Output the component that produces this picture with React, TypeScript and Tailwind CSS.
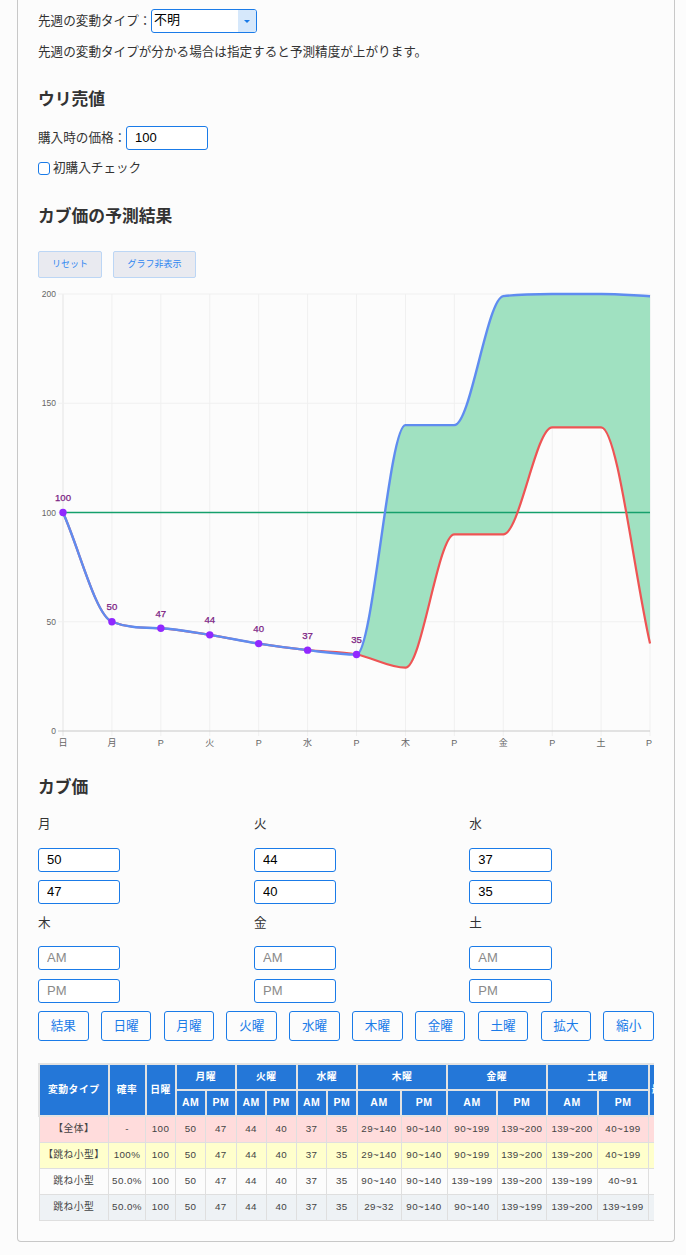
import React from "react";

const sans = "font-['Liberation_Sans','Noto_Sans_CJK_JP',sans-serif]";

const xLabels = ["日", "月", "P", "火", "P", "水", "P", "木", "P", "金", "P", "土", "P"];
const maxValues = [100, 50, 47, 44, 40, 37, 35, 140, 140, 199, 200, 200, 199];
const minValues = [100, 50, 47, 44, 40, 37, 35, 29, 90, 90, 139, 139, 40];
const marked = [100, 50, 47, 44, 40, 37, 35];

const xAt = (i: number) => 63 + i * 48.92;
const yAt = (v: number) => 731 - v * 2.185;

// same monotone cubic that chart.js uses, returns segments as "C ..." strings
function monotoneSegments(values: number[]) {
  const pts = values.map((v, i) => ({ x: xAt(i), y: yAt(v) }));
  const deltas = pts.slice(0, -1).map((p, i) => (pts[i + 1].y - p.y) / (pts[i + 1].x - p.x));
  const m = pts.map((_, i) => {
    if (i === 0) return deltas[0];
    if (i === pts.length - 1) return deltas[i - 1];
    if (deltas[i - 1] * deltas[i] <= 0) return 0;
    return (deltas[i - 1] + deltas[i]) / 2;
  });
  for (let i = 0; i < deltas.length; i++) {
    if (deltas[i] === 0) {
      m[i] = 0;
      m[i + 1] = 0;
      continue;
    }
    const a = m[i] / deltas[i];
    const b = m[i + 1] / deltas[i];
    const s = a * a + b * b;
    if (s > 9) {
      const t = 3 / Math.sqrt(s);
      m[i] = a * t * deltas[i];
      m[i + 1] = b * t * deltas[i];
    }
  }
  return pts.slice(0, -1).map((p, i) => {
    const q = pts[i + 1];
    const dx = (q.x - p.x) / 3;
    return { from: p, to: q, c1: { x: p.x + dx, y: p.y + dx * m[i] }, c2: { x: q.x - dx, y: q.y - dx * m[i + 1] } };
  });
}

const forward = (values: number[]) => {
  const segs = monotoneSegments(values);
  return `M${segs[0].from.x} ${segs[0].from.y}` + segs.map((s) => ` C${s.c1.x} ${s.c1.y} ${s.c2.x} ${s.c2.y} ${s.to.x} ${s.to.y}`).join("");
};

function bandPath() {
  const top = monotoneSegments(maxValues).slice(6);
  const bottom = monotoneSegments(minValues).slice(6).reverse();
  let d = `M${top[0].from.x} ${top[0].from.y}`;
  top.forEach((s) => (d += ` C${s.c1.x} ${s.c1.y} ${s.c2.x} ${s.c2.y} ${s.to.x} ${s.to.y}`));
  d += ` L${bottom[0].to.x} ${bottom[0].to.y}`;
  bottom.forEach((s) => (d += ` C${s.c2.x} ${s.c2.y} ${s.c1.x} ${s.c1.y} ${s.from.x} ${s.from.y}`));
  return d + " Z";
}

function Chart() {
  return (
    <svg viewBox="38 285 616 470" className="mt-[7px] block h-[470px] w-[616px]">
      {xLabels.map((_, i) => (
        <line key={i} x1={xAt(i)} x2={xAt(i)} y1={294} y2={736} stroke={i === 0 ? "#e4e4e4" : "#f0f0f0"} />
      ))}
      {[200, 150, 100, 50, 0].map((v) => (
        <g key={v}>
          <line x1={58} x2={650} y1={yAt(v)} y2={yAt(v)} stroke={v === 0 ? "#c8c8c8" : "#f0f0f0"} />
          <text x={56} y={yAt(v) + 3} textAnchor="end" fontSize="8.5" fill="#666" fontFamily="Liberation Sans">
            {v}
          </text>
        </g>
      ))}
      {xLabels.map((label, i) => (
        <text key={i} x={i === 12 ? xAt(i) - 1 : xAt(i)} y={746} textAnchor="middle" fontSize="9" fill="#666" fontFamily="Liberation Sans, Noto Sans CJK JP">
          {label}
        </text>
      ))}
      <path d={bandPath()} fill="#a0e1c1" />
      <line x1={63} x2={650} y1={yAt(100)} y2={yAt(100)} stroke="#15a06c" strokeWidth="1.5" />
      <path d={forward(minValues)} fill="none" stroke="#ee5454" strokeWidth="2.2" />
      <path d={forward(maxValues)} fill="none" stroke="#5f8cf0" strokeWidth="2.4" />
      {marked.map((v, i) => (
        <g key={i}>
          <circle cx={xAt(i)} cy={yAt(v)} r="3.7" fill="#9128ff" />
          <text x={xAt(i)} y={yAt(v) - 11.5} textAnchor="middle" fontSize="9.6" fill="#7b2183" stroke="#7b2183" strokeWidth="0.25" fontFamily="Liberation Sans">
            {v}
          </text>
        </g>
      ))}
    </svg>
  );
}

const inputClass =
  "block h-6 w-[82.4px] rounded-[3px] border border-[#1a7be8] bg-white pb-[2px] pl-[8px] text-[13px] text-black placeholder:text-[#8a8a8a] outline-none";

type DayProps = { label: string; am?: string; pm?: string; labelGap: string; amGap: string; pmGap: string };

function DayInputs({ label, am, pm, labelGap, amGap, pmGap }: DayProps) {
  return (
    <div>
      <p className={`h-[18px] text-[12.6px] leading-[18px] text-[#333] ${labelGap}`}>{label}</p>
      <input className={`${inputClass} ${amGap}`} defaultValue={am} placeholder="AM" />
      <input className={`${inputClass} ${pmGap}`} defaultValue={pm} placeholder="PM" />
    </div>
  );
}

const dayButtons = ["結果", "日曜", "月曜", "火曜", "水曜", "木曜", "金曜", "土曜", "拡大", "縮小"];

const colWidths = [69.5, 37, 30, 30.25, 30.25, 30.25, 30.25, 30.25, 30.25, 44, 46, 50, 49.5, 51, 51, 24];

type Row = { bg: string; cells: string[] };

const rows: Row[] = [
  {
    bg: "bg-[#ffdcdc]",
    cells: ["【全体】", "-", "100", "50", "47", "44", "40", "37", "35", "29~140", "90~140", "90~199", "139~200", "139~200", "40~199", ""],
  },
  {
    bg: "bg-[#ffffcc]",
    cells: ["【跳ね小型】", "100%", "100", "50", "47", "44", "40", "37", "35", "29~140", "90~140", "90~199", "139~200", "139~200", "40~199", ""],
  },
  {
    bg: "bg-[#fcfcfc]",
    cells: ["跳ね小型", "50.0%", "100", "50", "47", "44", "40", "37", "35", "90~140", "90~140", "139~199", "139~200", "139~199", "40~91", ""],
  },
  {
    bg: "bg-[#eef2f5]",
    cells: ["跳ね小型", "50.0%", "100", "50", "47", "44", "40", "37", "35", "29~32", "90~140", "90~140", "139~199", "139~200", "139~199", ""],
  },
];

const th = "border-2 border-[#e2e2e2] bg-[#2477d8] p-0 text-center font-bold text-white tracking-[0.5px]";

function PriceTable() {
  return (
    <div className="mt-[22px] w-[616px] overflow-hidden">
      <table className="w-[634px] table-fixed border-collapse text-[9.8px]">
        <colgroup>
          {colWidths.map((w, i) => (
            <col key={i} style={{ width: w }} />
          ))}
        </colgroup>
        <thead>
          <tr className="h-[26px]">
            <th rowSpan={2} className={th}>変動タイプ</th>
            <th rowSpan={2} className={th}>確率</th>
            <th rowSpan={2} className={th}>日曜</th>
            {["月曜", "火曜", "水曜", "木曜", "金曜", "土曜"].map((d) => (
              <th key={d} colSpan={2} className={th}>{d}</th>
            ))}
            <th rowSpan={2} className={`${th} overflow-hidden whitespace-nowrap !text-left pl-[2px]`}>最高</th>
          </tr>
          <tr className="h-[26px]">
            {Array.from({ length: 12 }, (_, i) => (
              <th key={i} className={`${th} text-[10.5px]`}>{i % 2 === 0 ? "AM" : "PM"}</th>
            ))}
          </tr>
        </thead>
        <tbody>
          {rows.map((row, r) => (
            <tr key={r} className={`h-[26px] ${row.bg}`}>
              {row.cells.map((cell, c) => (
                <td key={c} className="whitespace-nowrap border border-[#dfdfdf] p-0 text-center text-[#444] tracking-[0.4px]">
                  {cell}
                </td>
              ))}
            </tr>
          ))}
        </tbody>
      </table>
    </div>
  );
}

export default function App() {
  return (
    <div className={`min-h-[1255px] bg-[#fcfcfc] px-[17px] text-[#333] ${sans}`}>
      <div className="h-[1242px] w-[658px] rounded-b-[4px] border border-t-0 border-[#c8c8c8] pl-[20px] pt-[9px]">
        <div className="flex h-6 items-center text-[12.6px]">
          <span className="w-[113px] whitespace-nowrap">先週の変動タイプ：</span>
          <div className="relative h-6 w-[106px]">
            <select className="h-6 w-full appearance-none rounded-[3px] border border-[#1a7be8] bg-white pb-[2px] pl-[2px] text-[13px] text-black outline-none">
              <option>不明</option>
            </select>
            <span className="pointer-events-none absolute right-px top-px flex h-[22px] w-[18px] items-center justify-center rounded-r-[2px] bg-[#d6e8fb]">
              <span className="mt-px border-x-[3.5px] border-t-[3.5px] border-x-transparent border-t-[#1a7be8]" />
            </span>
          </div>
        </div>
        <p className="mt-[10px] h-[18px] whitespace-nowrap text-[12.6px] leading-[18px]">先週の変動タイプが分かる場合は指定すると予測精度が上がります。</p>

        <h2 className="mt-[27px] h-6 text-[16.8px] font-bold leading-6">ウリ売値</h2>
        <div className="mt-[14px] flex h-6 items-center text-[12.6px]">
          <span className="w-[88px] whitespace-nowrap">購入時の価格：</span>
          <input className={inputClass} defaultValue="100" />
        </div>
        <label className="mt-[9px] flex h-[18px] items-center text-[12.6px]">
          <span className="mr-[3px] mt-px h-[13px] w-3 rounded-[3px] border border-[#1a7be8] bg-white" />
          初購入チェック
        </label>

        <h2 className="mt-[28px] h-6 text-[16.8px] font-bold leading-6">カブ価の予測結果</h2>
        <div className="mt-[22px] flex gap-[11px]">
          <button className="h-[27px] w-[64px] rounded-[2px] border border-[#bcd6f5] bg-[#e9eaf0] text-[9px] text-[#2f86f0]">リセット</button>
          <button className="h-[27px] w-[83px] rounded-[2px] border border-[#bcd6f5] bg-[#e9eaf0] text-[9px] text-[#2f86f0]">グラフ非表示</button>
        </div>
        <Chart />

        <h2 className="mt-[21px] h-6 text-[16.8px] font-bold leading-6">カブ価</h2>
        <div className="grid w-[616px] grid-cols-[216px_215.3px_1fr]">
          <DayInputs label="月" am="50" pm="47" labelGap="mt-[15px]" amGap="mt-[15px]" pmGap="mt-[8px]" />
          <DayInputs label="火" am="44" pm="40" labelGap="mt-[15px]" amGap="mt-[15px]" pmGap="mt-[8px]" />
          <DayInputs label="水" am="37" pm="35" labelGap="mt-[15px]" amGap="mt-[15px]" pmGap="mt-[8px]" />
          <DayInputs label="木" labelGap="mt-[10px]" amGap="mt-[14px]" pmGap="mt-[9px]" />
          <DayInputs label="金" labelGap="mt-[10px]" amGap="mt-[14px]" pmGap="mt-[9px]" />
          <DayInputs label="土" labelGap="mt-[10px]" amGap="mt-[14px]" pmGap="mt-[9px]" />
        </div>
        <div className="mt-[8px] flex w-[616px] justify-between">
          {dayButtons.map((b) => (
            <button key={b} className="h-[30px] w-[50.5px] rounded-[3px] border border-[#1a7be8] bg-transparent text-[12.6px] text-[#1a7be8]">
              {b}
            </button>
          ))}
        </div>
        <PriceTable />
      </div>
    </div>
  );
}
